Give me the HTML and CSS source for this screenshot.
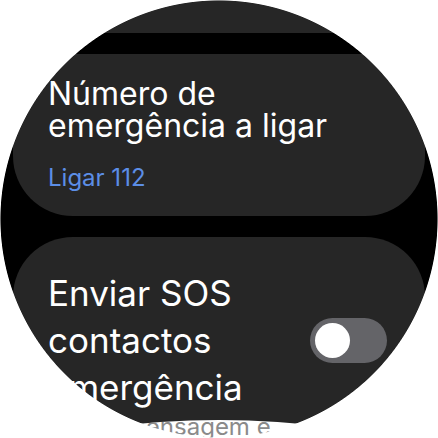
FILE: index.html
```html
<!DOCTYPE html>
<html lang="pt">
<head>
<meta charset="utf-8">
<link rel="stylesheet" href="styles.css">
</head>
<body>
<div class="screen">
  <div class="list">
    <div class="card card-prev"></div>
    <div class="card card-number">
      <div class="title">Número de emergência a ligar</div>
      <div class="sub sub-blue">Ligar 112</div>
    </div>
    <div class="card card-sos">
      <div class="row">
        <div class="title title-lg">Enviar SOS contactos emergência</div>
        <div class="toggle"><span class="thumb"></span></div>
      </div>
      <div class="sub sub-gray">Enviar mensagem e localização</div>
    </div>
  </div>
  <div class="mask"></div>
</div>
</body>
</html>
```

FILE: styles.css
```css
html, body {
  margin: 0;
  padding: 0;
  background: #fff;
}
body {
  font-family: Inter, Roboto, "Noto Sans", sans-serif;
}
.screen {
  position: relative;
  width: 438px;
  height: 438px;
  overflow: hidden;
  background: #000;
}
.list {
  display: flex;
  flex-direction: column;
  gap: 21px;
  padding: 0 13px;
  margin-top: -60px;
}
.card {
  background: #262626;
  border-radius: 60px;
}
.card-prev {
  height: 93px;
}
.card-number {
  height: 162px;
  box-sizing: border-box;
  padding: 24px 50px 0 35px;
}
.title {
  color: #fff;
  font-size: 32px;
  line-height: 32px;
}
.sub-blue {
  color: #5c8ee6;
  font-size: 24px;
  line-height: 28px;
  margin-top: 22px;
}
.card-sos {
  height: 260px;
  box-sizing: border-box;
  padding: 33px 38px 0 35px;
}
.row {
  display: flex;
  align-items: flex-start;
}
.title-lg {
  flex: 1;
  min-width: 0;
  font-size: 35px;
  line-height: 47px;
}
.toggle {
  flex: none;
  width: 77px;
  height: 45px;
  margin-top: 48px;
  margin-left: 16px;
  border-radius: 23px;
  background: #646468;
  box-sizing: border-box;
  padding: 5px;
}
.thumb {
  display: block;
  width: 35px;
  height: 35px;
  border-radius: 50%;
  background: #fff;
}
.sub-gray {
  color: #8a8a8a;
  font-size: 24px;
  line-height: 28px;
  margin-top: 2px;
  padding-bottom: 20px;
  background: #fff;
  clip-path: ellipse(300px 100px at 171px 107px);
}
.mask {
  position: absolute;
  inset: 0;
  pointer-events: none;
  background: radial-gradient(circle 219px at 219px 219px, rgba(255,255,255,0) 99.6%, #fff 100%);
}
```
